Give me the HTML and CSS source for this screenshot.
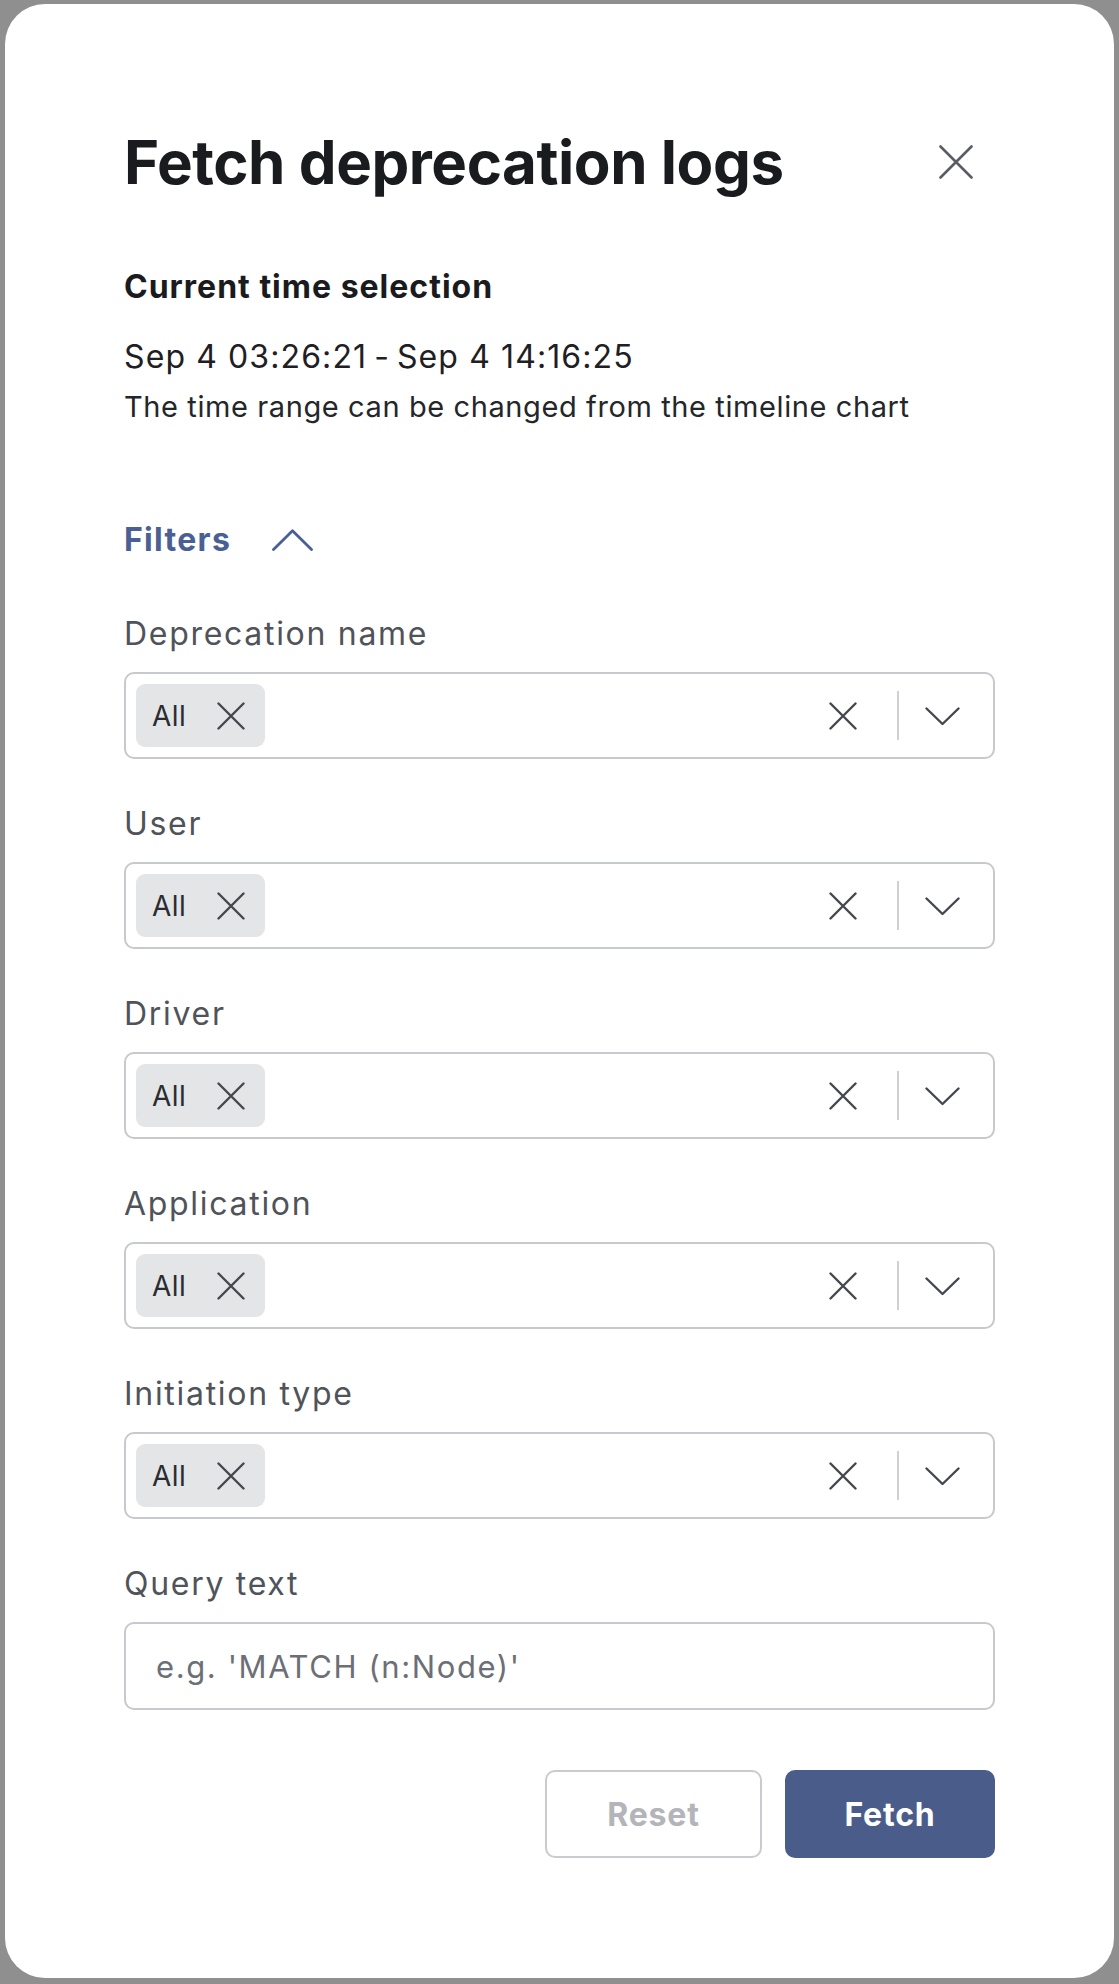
FILE: index.html
```html
<!DOCTYPE html>
<html lang="en">
<head>
<meta charset="utf-8">
<title>Fetch deprecation logs</title>
<link rel="stylesheet" href="styles.css">
</head>
<body>
<div class="modal">
  <div class="header">
    <h1 class="title">Fetch deprecation logs</h1>
    <button class="close" aria-label="Close">
      <svg width="34" height="34" viewBox="0 0 34 34"><path d="M1.5 1.5 L32.5 32.5 M32.5 1.5 L1.5 32.5" stroke="#5a5d64" stroke-width="2.6" fill="none" stroke-linecap="round"/></svg>
    </button>
  </div>

  <div class="section-title">Current time selection</div>
  <div class="range">Sep 4 03:26:21<span class="dash">-</span>Sep 4 14:16:25</div>
  <div class="hint">The time range can be changed from the timeline chart</div>

  <div class="filters-toggle">
    <span>Filters</span>
    <svg width="41" height="22" viewBox="0 0 41 22"><path d="M1.5 20.5 L20.5 1.8 L39.5 20.5" stroke="#4a6094" stroke-width="2.8" fill="none" stroke-linecap="round" stroke-linejoin="round"/></svg>
  </div>

  <div class="fields">
    <div class="field">
      <label class="label">Deprecation name</label>
      <div class="select">
        <span class="chip">All<svg class="chip-x" width="28" height="28" viewBox="0 0 28 28"><path d="M1.5 1.5 L26.5 26.5 M26.5 1.5 L1.5 26.5" stroke="#44474e" stroke-width="2.4" fill="none" stroke-linecap="round"/></svg></span>
        <span class="spacer"></span>
        <svg class="clear" width="28" height="28" viewBox="0 0 28 28"><path d="M1.5 1.5 L26.5 26.5 M26.5 1.5 L1.5 26.5" stroke="#44474e" stroke-width="2.4" fill="none" stroke-linecap="round"/></svg>
        <span class="sep"></span>
        <svg class="caret" width="35" height="19" viewBox="0 0 35 19"><path d="M1.5 1.5 L17.5 17 L33.5 1.5" stroke="#44474e" stroke-width="2.4" fill="none" stroke-linecap="round" stroke-linejoin="round"/></svg>
      </div>
    </div>
    <div class="field">
      <label class="label">User</label>
      <div class="select">
        <span class="chip">All<svg class="chip-x" width="28" height="28" viewBox="0 0 28 28"><path d="M1.5 1.5 L26.5 26.5 M26.5 1.5 L1.5 26.5" stroke="#44474e" stroke-width="2.4" fill="none" stroke-linecap="round"/></svg></span>
        <span class="spacer"></span>
        <svg class="clear" width="28" height="28" viewBox="0 0 28 28"><path d="M1.5 1.5 L26.5 26.5 M26.5 1.5 L1.5 26.5" stroke="#44474e" stroke-width="2.4" fill="none" stroke-linecap="round"/></svg>
        <span class="sep"></span>
        <svg class="caret" width="35" height="19" viewBox="0 0 35 19"><path d="M1.5 1.5 L17.5 17 L33.5 1.5" stroke="#44474e" stroke-width="2.4" fill="none" stroke-linecap="round" stroke-linejoin="round"/></svg>
      </div>
    </div>
    <div class="field">
      <label class="label">Driver</label>
      <div class="select">
        <span class="chip">All<svg class="chip-x" width="28" height="28" viewBox="0 0 28 28"><path d="M1.5 1.5 L26.5 26.5 M26.5 1.5 L1.5 26.5" stroke="#44474e" stroke-width="2.4" fill="none" stroke-linecap="round"/></svg></span>
        <span class="spacer"></span>
        <svg class="clear" width="28" height="28" viewBox="0 0 28 28"><path d="M1.5 1.5 L26.5 26.5 M26.5 1.5 L1.5 26.5" stroke="#44474e" stroke-width="2.4" fill="none" stroke-linecap="round"/></svg>
        <span class="sep"></span>
        <svg class="caret" width="35" height="19" viewBox="0 0 35 19"><path d="M1.5 1.5 L17.5 17 L33.5 1.5" stroke="#44474e" stroke-width="2.4" fill="none" stroke-linecap="round" stroke-linejoin="round"/></svg>
      </div>
    </div>
    <div class="field">
      <label class="label">Application</label>
      <div class="select">
        <span class="chip">All<svg class="chip-x" width="28" height="28" viewBox="0 0 28 28"><path d="M1.5 1.5 L26.5 26.5 M26.5 1.5 L1.5 26.5" stroke="#44474e" stroke-width="2.4" fill="none" stroke-linecap="round"/></svg></span>
        <span class="spacer"></span>
        <svg class="clear" width="28" height="28" viewBox="0 0 28 28"><path d="M1.5 1.5 L26.5 26.5 M26.5 1.5 L1.5 26.5" stroke="#44474e" stroke-width="2.4" fill="none" stroke-linecap="round"/></svg>
        <span class="sep"></span>
        <svg class="caret" width="35" height="19" viewBox="0 0 35 19"><path d="M1.5 1.5 L17.5 17 L33.5 1.5" stroke="#44474e" stroke-width="2.4" fill="none" stroke-linecap="round" stroke-linejoin="round"/></svg>
      </div>
    </div>
    <div class="field">
      <label class="label">Initiation type</label>
      <div class="select">
        <span class="chip">All<svg class="chip-x" width="28" height="28" viewBox="0 0 28 28"><path d="M1.5 1.5 L26.5 26.5 M26.5 1.5 L1.5 26.5" stroke="#44474e" stroke-width="2.4" fill="none" stroke-linecap="round"/></svg></span>
        <span class="spacer"></span>
        <svg class="clear" width="28" height="28" viewBox="0 0 28 28"><path d="M1.5 1.5 L26.5 26.5 M26.5 1.5 L1.5 26.5" stroke="#44474e" stroke-width="2.4" fill="none" stroke-linecap="round"/></svg>
        <span class="sep"></span>
        <svg class="caret" width="35" height="19" viewBox="0 0 35 19"><path d="M1.5 1.5 L17.5 17 L33.5 1.5" stroke="#44474e" stroke-width="2.4" fill="none" stroke-linecap="round" stroke-linejoin="round"/></svg>
      </div>
    </div>
    <div class="field">
      <label class="label">Query text</label>
      <div class="input"><span class="placeholder">e.g. 'MATCH (n:Node)'</span></div>
    </div>
  </div>

  <div class="actions">
    <button class="btn btn-reset">Reset</button>
    <button class="btn btn-fetch">Fetch</button>
  </div>
</div>
</body>
</html>
```

FILE: styles.css
```css
* { box-sizing: border-box; }

html, body {
  margin: 0;
  padding: 0;
}

body {
  background: #8f8f8f;
  font-family: "Inter", "Liberation Sans", sans-serif;
  color: #1b1c1f;
  padding: 4px 5px 6px 5px;
}

.modal {
  background: #ffffff;
  border-radius: 40px;
  height: 1974px;
  padding: 126px 119px 0 119px;
}

.header {
  display: flex;
  align-items: center;
  justify-content: space-between;
}

.title {
  margin: 0;
  font-size: 60px;
  line-height: 64px;
  font-weight: 700;
  letter-spacing: -0.45px;
  color: #1a1b1e;
}

.close {
  border: 0;
  background: none;
  padding: 0;
  margin-right: 22px;
  width: 34px;
  height: 34px;
  display: flex;
}

.section-title {
  margin-top: 73px;
  font-size: 32px;
  line-height: 40px;
  font-weight: 700;
  letter-spacing: 1px;
  color: #1a1b1e;
}

.range {
  margin-top: 30px;
  font-size: 32px;
  line-height: 40px;
  letter-spacing: 1.1px;
  color: #1f2023;
}

.range .dash {
  margin: 0 7px;
}

.hint {
  margin-top: 12px;
  font-size: 29px;
  line-height: 36px;
  letter-spacing: 0.6px;
  color: #25262a;
}

.filters-toggle {
  margin-top: 95px;
  display: flex;
  align-items: center;
  gap: 41px;
  font-size: 32px;
  line-height: 40px;
  font-weight: 700;
  letter-spacing: 1.3px;
  color: #4a6094;
}

.fields {
  margin-top: 54px;
  display: flex;
  flex-direction: column;
  gap: 45px;
}

.field {
  display: flex;
  flex-direction: column;
  gap: 18px;
}

.label {
  font-size: 32px;
  line-height: 40px;
  letter-spacing: 1.7px;
  color: #50535a;
}

.select {
  height: 87px;
  border: 2px solid #c6c9ce;
  border-radius: 10px;
  display: flex;
  align-items: center;
  padding: 0 33px 0 10px;
}

.chip {
  display: flex;
  align-items: center;
  height: 63px;
  width: 129px;
  padding: 0 20px 0 16px;
  background: #e4e5e7;
  border-radius: 9px;
  font-size: 28px;
  letter-spacing: 0.5px;
  color: #2a2c31;
  justify-content: space-between;
}

.spacer { flex: 1; }

.clear { flex: none; }

.sep {
  width: 2px;
  height: 49px;
  background: #cdd0d4;
  margin: 0 26px 0 40px;
}

.caret { flex: none; margin-top: 1px; }

.input {
  height: 88px;
  border: 2px solid #c6c9ce;
  border-radius: 10px;
  display: flex;
  align-items: center;
  padding: 0 30px;
}

.placeholder {
  font-size: 31px;
  letter-spacing: 1.6px;
  color: #6c6f76;
}

.actions {
  margin-top: 60px;
  display: flex;
  justify-content: flex-end;
  gap: 23px;
}

.btn {
  height: 88px;
  border-radius: 10px;
  font-family: "Inter", "Liberation Sans", sans-serif;
  font-size: 32px;
  font-weight: 700;
  letter-spacing: 0.8px;
}

.btn-reset {
  width: 217px;
  background: #ffffff;
  border: 2px solid #c9cbd0;
  color: #b3b5ba;
}

.btn-fetch {
  width: 210px;
  background: #4a5d8a;
  border: 0;
  color: #ffffff;
}
```
